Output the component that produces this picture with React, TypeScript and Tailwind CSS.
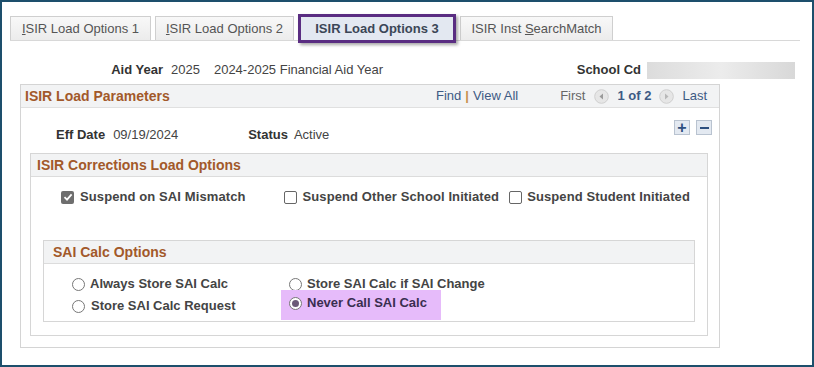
import React from 'react';

const font = { fontFamily: '"Liberation Sans", Arial, sans-serif' };

function Tab({ label, w, active }: { label: React.ReactNode; w: string; active?: boolean }) {
  if (active) {
    return (
      <div className={`${w} h-[29px] border-[3px] border-[#5a2d82] shadow-[2px_2px_3px_rgba(0,0,0,0.35)] bg-[#e3e8f1] flex items-center justify-center text-[13px] font-bold text-[#3b4656] mb-[-3px] relative z-10`}>
        {label}
      </div>
    );
  }
  return (
    <div className={`${w} h-[24px] border border-b-0 border-[#cfcfcf] bg-gradient-to-b from-[#f8f8f8] to-[#ececec] flex items-center justify-center text-[13px] text-[#555]`}>
      {label}
    </div>
  );
}

function Check({ checked }: { checked?: boolean }) {
  if (checked) {
    return (
      <span className="w-[13px] h-[13px] rounded-[2px] bg-[#6e6e6e] flex items-center justify-center">
        <svg width="10" height="10" viewBox="0 0 10 10">
          <path d="M1.5 5.2 L4 7.6 L8.6 2.4" stroke="#fff" strokeWidth="1.8" fill="none" />
        </svg>
      </span>
    );
  }
  return <span className="w-[13px] h-[13px] rounded-[2px] border border-[#666] bg-white" />;
}

function Radio({ checked }: { checked?: boolean }) {
  return (
    <span className="w-[13px] h-[13px] rounded-full border border-[#777] bg-white flex items-center justify-center">
      {checked && <span className="w-[7px] h-[7px] rounded-full bg-[#6c5a78]" />}
    </span>
  );
}

function Arrow({ dir }: { dir: 'l' | 'r' }) {
  return (
    <svg width="15" height="15" viewBox="0 0 15 15">
      <circle cx="7.5" cy="7.5" r="6.8" fill="#e6e6e6" stroke="#cfcfcf" />
      {dir === 'l' ? <path d="M9 4.5 L5.5 7.5 L9 10.5 Z" fill="#9a9a9a" /> : <path d="M6 4.5 L9.5 7.5 L6 10.5 Z" fill="#b8b8b8" />}
    </svg>
  );
}

const optLabel = 'text-[13px] font-bold text-[#444]';

export default function App() {
  return (
    <div className="w-[814px] h-[367px] border-2 border-[#1d4f6c] bg-white overflow-hidden" style={font}>
      {/* tabs */}
      <div className="pt-[12px] pl-[8px] pr-[12px]">
        <div className="flex items-end gap-[4px] border-b border-[#d8d8d8]">
          <Tab w="w-[141px]" label={<span><span className="underline">I</span>SIR Load Options 1</span>} />
          <Tab w="w-[139px]" label={<span><span className="underline">I</span>SIR Load Options 2</span>} />
          <Tab w="w-[158px]" active label="ISIR Load Options 3" />
          <Tab w="w-[153px]" label={<span>ISIR Inst <span className="underline">S</span>earchMatch</span>} />
        </div>
      </div>

      {/* aid year row */}
      <div className="flex items-center h-[18px] mt-[20px] text-[13px]">
        <span className="w-[161px] text-right font-bold text-[#333]">Aid Year</span>
        <span className="ml-[8px] text-[#444]">2025</span>
        <span className="ml-[14px] text-[#444]">2024-2025 Financial Aid Year</span>
        <span className="ml-auto font-bold text-[#333]">School Cd</span>
        <span className="ml-[6px] mr-[17px] w-[148px] h-[17px] bg-gradient-to-r from-[#dcdcdc] via-[#ececec] to-[#d8d8d8]" />
      </div>

      {/* parameters box */}
      <div className="ml-[18px] mt-[5px] w-[700px] h-[264px] border border-[#d4d4d4]">
        <div className="h-[23px] bg-[#f2f3f4] border-b border-[#e0e0e0] flex items-center pl-[4px] pr-[12px]">
          <span className="text-[14px] font-bold text-[#a2592a]">ISIR Load Parameters</span>
          <span className="ml-auto text-[13px] text-[#3d5a84]">Find</span>
          <span className="mx-[4px] text-[13px] text-[#c8914e] font-bold">|</span>
          <span className="text-[13px] text-[#3d5a84]">View All</span>
          <span className="ml-[42px] text-[13px] text-[#666]">First</span>
          <span className="ml-[9px] flex"><Arrow dir="l" /></span>
          <span className="ml-[8px] text-[13px] font-bold text-[#3d5a84]">1 of 2</span>
          <span className="ml-[8px] flex"><Arrow dir="r" /></span>
          <span className="ml-[8px] text-[13px] text-[#3d5a84]">Last</span>
        </div>

        <div className="flex items-start h-[46px] pr-[7px]">
          <div className="flex items-center mt-[17px] text-[13px]">
            <span className="ml-[35px] font-bold text-[#333]">Eff Date</span>
            <span className="ml-[8px] text-[#444]">09/19/2024</span>
            <span className="ml-[70px] font-bold text-[#333]">Status</span>
            <span className="ml-[6px] text-[#444]">Active</span>
          </div>
          <div className="ml-auto mt-[12px] flex gap-[6px]">
            <span className="w-[16px] h-[15px] border border-[#b9c3d0] bg-[#e3e9f1] flex items-center justify-center text-[#2d5080] font-bold text-[16px] leading-none">+</span>
            <span className="w-[16px] h-[15px] border border-[#b9c3d0] bg-[#e3e9f1] flex items-center justify-center">
              <span className="w-[9px] h-[2px] bg-[#2d5080]" />
            </span>
          </div>
        </div>

        {/* corrections box */}
        <div className="ml-[9px] mt-[-1px] w-[678px] h-[183px] border border-[#d6d6d6]">
          <div className="h-[23px] bg-[#f2f3f4] border-b border-[#dcdcdc] flex items-center pl-[6px]">
            <span className="text-[14px] font-bold text-[#a2592a]">ISIR Corrections Load Options</span>
          </div>
          <div className="flex items-center h-[18px] mt-[11px] pl-[30px]">
            <Check checked />
            <span className={`ml-[6px] tracking-[0.1px] ${optLabel}`}>Suspend on SAI Mismatch</span>
            <span className="ml-[38px] flex"><Check /></span>
            <span className={`ml-[6px] tracking-[0.1px] ${optLabel}`}>Suspend Other School Initiated</span>
            <span className="ml-[10px] flex"><Check /></span>
            <span className={`ml-[5px] tracking-[0.1px] ${optLabel}`}>Suspend Student Initiated</span>
          </div>

          {/* SAI calc box */}
          <div className="ml-[12px] mt-[34px] w-[652px] h-[82px] border border-[#d6d6d6]">
            <div className="h-[23px] bg-[#f2f3f4] border-b border-[#dcdcdc] flex items-center pl-[9px]">
              <span className="text-[14px] font-bold text-[#a2592a]">SAI Calc Options</span>
            </div>
            <div className="flex pl-[28px] pt-[13px]">
              <div className="w-[209px] flex flex-col gap-[8px]">
                <div className="flex items-center h-[14px]">
                  <Radio />
                  <span className={`ml-[5px] ${optLabel}`}>Always Store SAI Calc</span>
                </div>
                <div className="flex items-center h-[14px]">
                  <Radio />
                  <span className={`ml-[6px] ${optLabel}`}>Store SAI Calc Request</span>
                </div>
              </div>
              <div className="flex flex-col">
                <div className="flex items-center h-[14px] pl-[8px]">
                  <Radio />
                  <span className={`ml-[5px] ${optLabel}`}>Store SAI Calc if SAI Change</span>
                </div>
                <div className="w-[160px] h-[30px] mt-[-1px] bg-[#e6bbfa] flex items-start pt-[6px] pl-[8px]">
                  <div className="flex items-center h-[14px]">
                    <Radio checked />
                    <span className="ml-[5px] text-[13px] font-bold text-[#3a2e50]">Never Call SAI Calc</span>
                  </div>
                </div>
              </div>
            </div>
          </div>
        </div>
      </div>
    </div>
  );
}
